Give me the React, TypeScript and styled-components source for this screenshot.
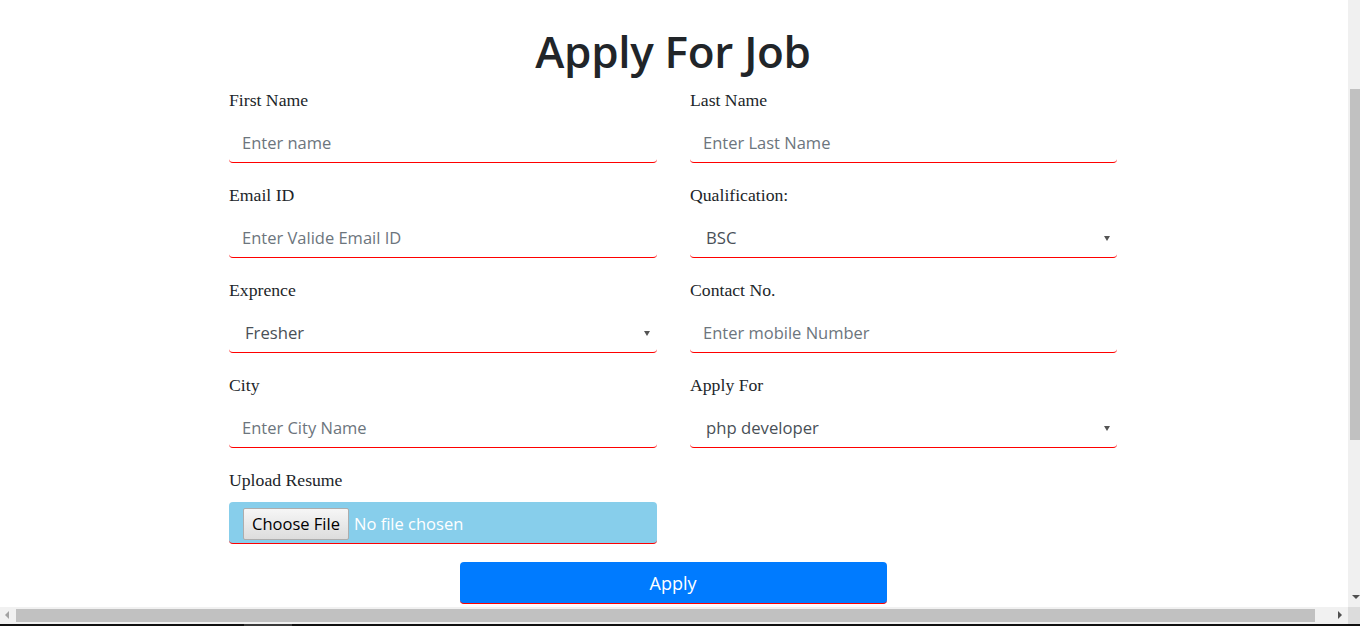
import React from "react";
import styled, { createGlobalStyle } from "styled-components";

const GlobalStyle = createGlobalStyle`
  html, body {
    margin: 0;
    padding: 0;
    background: #ffffff;
    overflow: hidden;
    height: 626px;
  }
  body {
    font-family: "Open Sans", "Liberation Sans", sans-serif;
    color: #212529;
  }
  * { box-sizing: border-box; }
`;

const Page = styled.main`
  display: flex;
  flex-direction: column;
  align-items: center;
  padding: 24px 14px 0 0;
`;

const Title = styled.h1`
  margin: 0 0 10px 0;
  font-family: "Open Sans", "Liberation Sans", sans-serif;
  font-weight: 600;
  font-size: 44px;
  line-height: 55px;
  color: #212529;
  letter-spacing: -0.3px;
`;

const Form = styled.form`
  display: flex;
  flex-direction: column;
  align-items: center;
  width: 888px;
`;

const FormGrid = styled.div`
  display: grid;
  grid-template-columns: 428px 427px;
  column-gap: 33px;
  row-gap: 21px;
  width: 100%;
`;

const Field = styled.div<{ $gap?: number }>`
  display: flex;
  flex-direction: column;
  gap: ${(p) => p.$gap ?? 14}px;
`;

const Label = styled.label`
  font-family: "Liberation Serif", "Times New Roman", serif;
  font-size: 17.7px;
  line-height: 22px;
  height: 22px;
  color: #212529;
`;

const TextInput = styled.input`
  width: 100%;
  height: 38px;
  border: none;
  border-bottom: 1px solid #ff0000;
  border-radius: 4px;
  padding: 0 12px 2px 13px;
  font-family: "Open Sans", "Liberation Sans", sans-serif;
  font-size: 16.5px;
  color: #495057;
  background: #ffffff;
  outline: none;
  &::placeholder {
    color: #6c757d;
  }
`;

const SelectWrap = styled.div`
  position: relative;
  width: 100%;
`;

const Select = styled.select`
  appearance: none;
  -webkit-appearance: none;
  width: 100%;
  height: 38px;
  border: none;
  border-bottom: 1px solid #ff0000;
  border-radius: 4px;
  padding: 0 24px 2px 16px;
  font-family: "Open Sans", "Liberation Sans", sans-serif;
  font-size: 16.7px;
  color: #495057;
  background: #ffffff;
  outline: none;
`;

const Caret = styled.span`
  position: absolute;
  right: 7px;
  top: 16px;
  width: 0;
  height: 0;
  border-left: 3.5px solid transparent;
  border-right: 3.5px solid transparent;
  border-top: 5px solid #555555;
  pointer-events: none;
`;

const FileBox = styled.label`
  display: flex;
  align-items: center;
  gap: 5px;
  width: 100%;
  height: 42px;
  padding: 2px 0 0 14px;
  background: #87ceeb;
  border-bottom: 1px solid #ff0000;
  border-radius: 4px;
  cursor: pointer;
`;

const HiddenFile = styled.input`
  display: none;
`;

const FileButton = styled.span`
  display: flex;
  align-items: center;
  justify-content: center;
  width: 106px;
  height: 32px;
  border: 1px solid #adadad;
  border-radius: 2px;
  background: linear-gradient(#f6f6f6, #dddddd);
  font-family: "Open Sans", "Liberation Sans", sans-serif;
  font-size: 16.5px;
  color: #000000;
`;

const FileText = styled.span`
  font-family: "Open Sans", "Liberation Sans", sans-serif;
  font-size: 16.5px;
  color: #ffffff;
`;

const SubmitButton = styled.button`
  margin-top: 18px;
  width: 427px;
  height: 42px;
  border: none;
  border-bottom: 1px solid #ff0000;
  border-radius: 4px;
  background: #007bff;
  color: #ffffff;
  font-family: "Open Sans", "Liberation Sans", sans-serif;
  font-size: 18px;
  cursor: pointer;
  padding: 0;
`;

/* Browser chrome overlays (scrollbars + taskbar strip) */
const VScroll = styled.div`
  position: fixed;
  top: 0;
  right: 0;
  width: 12px;
  height: 607px;
  background: #f0f0f0;
`;

const VThumb = styled.div`
  position: absolute;
  left: 2px;
  right: 0;
  top: 89px;
  height: 351px;
  background: #c1c1c1;
`;

const DownArrow = styled.span`
  position: absolute;
  left: 4px;
  top: 595px;
  width: 0;
  height: 0;
  border-left: 4px solid transparent;
  border-right: 4px solid transparent;
  border-top: 4px solid #505050;
`;

const HScroll = styled.div`
  position: fixed;
  left: 0;
  bottom: 2px;
  width: 1348px;
  height: 17px;
  background: #f1f1f1;
`;

const HThumb = styled.div`
  position: absolute;
  left: 16px;
  width: 1299px;
  top: 2px;
  height: 13px;
  background: #c1c1c1;
`;

const LeftArrow = styled.span`
  position: absolute;
  left: 5px;
  top: 4px;
  width: 0;
  height: 0;
  border-top: 4px solid transparent;
  border-bottom: 4px solid transparent;
  border-right: 4px solid #a3a3a3;
`;

const RightArrow = styled.span`
  position: absolute;
  right: 6px;
  top: 4px;
  width: 0;
  height: 0;
  border-top: 4px solid transparent;
  border-bottom: 4px solid transparent;
  border-left: 4px solid #505050;
`;

const Corner = styled.div`
  position: fixed;
  right: 0;
  bottom: 2px;
  width: 12px;
  height: 17px;
  background: #dcdcdc;
`;

const Taskbar = styled.div`
  position: fixed;
  left: 0;
  bottom: 0;
  width: 100%;
  height: 2px;
  background: #101010;
`;

const TaskItem = styled.span`
  position: absolute;
  left: 244px;
  width: 48px;
  top: 0;
  height: 2px;
  background: #3a3a3a;
`;

export default function App() {
  return (
    <>
      <GlobalStyle />
      <Page>
        <Title>Apply For Job</Title>
        <Form onSubmit={(e) => e.preventDefault()}>
          <FormGrid>
            <Field>
              <Label htmlFor="fname">First Name</Label>
              <TextInput id="fname" placeholder="Enter name" />
            </Field>
            <Field>
              <Label htmlFor="lname">Last Name</Label>
              <TextInput id="lname" placeholder="Enter Last Name" />
            </Field>
            <Field>
              <Label htmlFor="email">Email ID</Label>
              <TextInput id="email" placeholder="Enter Valide Email ID" />
            </Field>
            <Field>
              <Label htmlFor="qual">Qualification:</Label>
              <SelectWrap>
                <Select id="qual" defaultValue="BSC">
                  <option>BSC</option>
                  <option>MSC</option>
                  <option>BCA</option>
                  <option>MCA</option>
                </Select>
                <Caret />
              </SelectWrap>
            </Field>
            <Field>
              <Label htmlFor="exp">Exprence</Label>
              <SelectWrap>
                <Select id="exp" defaultValue="Fresher">
                  <option>Fresher</option>
                  <option>1 Year</option>
                  <option>2 Years</option>
                </Select>
                <Caret />
              </SelectWrap>
            </Field>
            <Field>
              <Label htmlFor="contact">Contact No.</Label>
              <TextInput id="contact" placeholder="Enter mobile Number" />
            </Field>
            <Field>
              <Label htmlFor="city">City</Label>
              <TextInput id="city" placeholder="Enter City Name" />
            </Field>
            <Field>
              <Label htmlFor="applyfor">Apply For</Label>
              <SelectWrap>
                <Select id="applyfor" defaultValue="php developer">
                  <option>php developer</option>
                  <option>java developer</option>
                  <option>web designer</option>
                </Select>
                <Caret />
              </SelectWrap>
            </Field>
            <Field $gap={11}>
              <Label htmlFor="resume">Upload Resume</Label>
              <FileBox htmlFor="resume">
                <HiddenFile id="resume" type="file" />
                <FileButton>Choose File</FileButton>
                <FileText>No file chosen</FileText>
              </FileBox>
            </Field>
          </FormGrid>
          <SubmitButton type="submit">Apply</SubmitButton>
        </Form>
      </Page>
      <VScroll>
        <VThumb />
        <DownArrow />
      </VScroll>
      <HScroll>
        <LeftArrow />
        <HThumb />
        <RightArrow />
      </HScroll>
      <Corner />
      <Taskbar>
        <TaskItem />
      </Taskbar>
    </>
  );
}
